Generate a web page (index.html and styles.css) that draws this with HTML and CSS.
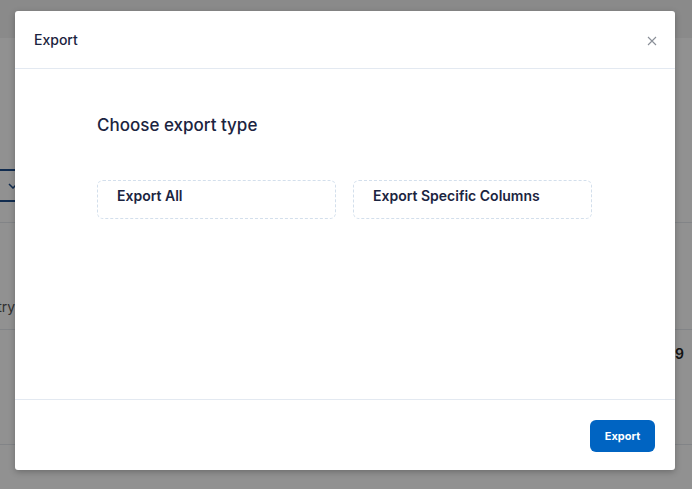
FILE: index.html
```html
<!DOCTYPE html>
<html lang="en">
<head>
<meta charset="utf-8">
<title>Export</title>
<link rel="stylesheet" href="styles.css">
</head>
<body>
<div class="page">
  <div class="page-header"></div>
  <div class="page-spacer"></div>
  <div class="toolbar">
    <div class="select"><svg class="chev" width="10" height="6" viewBox="0 0 10 6"><path d="M1 1l4 4 4-4" fill="none" stroke="#1f4e8c" stroke-width="1.5"/></svg></div>
  </div>
  <div class="row row-head"><span class="cell-left">Country</span></div>
  <div class="row row-data"><span class="cell-right">2019</span></div>
</div>
<div class="overlay"></div>
<div class="modal">
  <div class="modal-header">
    <h2 class="modal-title">Export</h2>
    <svg class="close" width="10" height="10" viewBox="0 0 10 10"><path d="M1 1l8 8M9 1l-8 8" stroke="#8a8f98" stroke-width="1.1" fill="none"/></svg>
  </div>
  <div class="modal-body">
    <h3 class="body-title">Choose export type</h3>
    <div class="options">
      <div class="option">Export All</div>
      <div class="option">Export Specific Columns</div>
    </div>
  </div>
  <div class="modal-footer">
    <button class="btn-export">Export</button>
  </div>
</div>
</body>
</html>
```
FILE: styles.css
```css
* { box-sizing: border-box; }
html, body { margin: 0; padding: 0; }
body {
  width: 692px;
  height: 489px;
  overflow: hidden;
  font-family: Inter, "Liberation Sans", sans-serif;
  background: #fff;
  position: relative;
}
.page { width: 692px; }
.page-header { height: 38px; background: #f3f3f3; }
.page-spacer { height: 131px; }
.toolbar { height: 54px; border-bottom: 1px solid #e4e8ee; display: flex; }
.select {
  width: 60px; margin-left: -40px; height: 33px;
  border-top: 2px solid #1f4e8c; border-bottom: 2px solid #1f4e8c;
  display: flex; align-items: center; justify-content: flex-end; padding-right: 2px;
}
.row { display: flex; align-items: center; border-bottom: 1px solid #e4e8ee; }
.row-head { height: 107px; align-items: flex-end; padding-bottom: 14px; }
.cell-left { margin-left: -38px; color: #555; font-size: 14px; }
.row-data { height: 115px; justify-content: flex-end; align-items: flex-start; padding-top: 15px; }
.cell-right { margin-right: 8px; font-size: 14px; color: #222; font-weight: 600; }
.overlay {
  position: absolute; inset: 0;
  background: rgba(0, 0, 0, 0.43);
}
.modal {
  position: absolute;
  left: 15px; top: 11px;
  width: 660px; height: 459px;
  background: #fff;
  border-radius: 3px;
  box-shadow: 0 2px 6px rgba(0,0,0,0.25);
  display: flex; flex-direction: column;
}
.modal-header {
  height: 58px;
  border-bottom: 1px solid #e3e9f1;
  display: flex; align-items: center; justify-content: space-between;
  padding: 0 18px 0 19px;
}
.modal-title {
  margin: 0; font-size: 14px; font-weight: 500; color: #1b2440;
}
.close { margin-top: 3px; }
.modal-body {
  flex: 1;
  padding: 46px 82px 0 82px;
  border-bottom: 1px solid #e3e9f1;
}
.body-title {
  margin: 0; font-size: 17px; font-weight: 500; color: #1b2440;
}
.options {
  display: flex; gap: 17px; margin-top: 45px;
}
.option {
  width: 239px; height: 39px;
  border: 1px dashed #d3dfec;
  border-radius: 6px;
  padding: 6px 0 0 19px;
  font-size: 14px; font-weight: 600; color: #1b2440;
}
.modal-footer {
  height: 70px;
  display: flex; align-items: center; justify-content: flex-end;
  padding: 0 20px 0 0;
}
.btn-export {
  width: 65px; height: 32px;
  background: #0064c2;
  border: none; border-radius: 6px;
  color: #fff; font-family: Inter, "Liberation Sans", sans-serif;
  font-size: 11px; font-weight: 700;
  margin-top: 2px;
}
```
